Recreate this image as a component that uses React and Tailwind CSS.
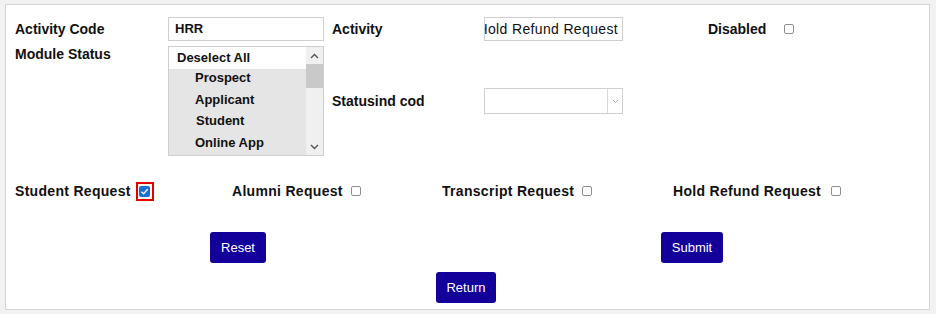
import React from "react";

const F = { fontFamily: '"Liberation Sans", Arial, sans-serif' };

function Box({ checked = false }) {
  if (checked) {
    return (
      <span className="inline-flex h-[19px] w-[18px] items-center justify-center border-2 border-[#e00000] bg-white">
        <span className="flex h-[11px] w-[11px] items-center justify-center rounded-[2px] bg-[#1a6fd8]">
          <svg width="9" height="9" viewBox="0 0 9 9">
            <path d="M1.5 4.8 L3.6 6.8 L7.6 2.2" fill="none" stroke="white" strokeWidth="1.4" />
          </svg>
        </span>
      </span>
    );
  }
  return <span className="inline-block h-[10px] w-[10px] rounded-[2px] border border-[#8f8f8f] bg-white" />;
}

function Btn({ children, w }) {
  return (
    <button
      className={`h-[31px] rounded-[3px] bg-[#13009b] text-[13px] font-normal text-white ${w}`}
      style={F}
    >
      {children}
    </button>
  );
}

export default function App() {
  return (
    <div className="h-[314px] w-[936px] bg-[#f2f2f2] pl-[5px] pt-[4px]" style={F}>
      <div className="h-[306px] w-[925px] border border-[#d5d5d5] bg-white text-[14px] font-bold text-[#111]">
        {/* Row 1 */}
        <div className="mt-[12px] flex h-[24px] items-center">
          <div className="w-[162px] pl-[9px]">Activity Code</div>
          <div className="flex h-[24px] w-[156px] items-center border border-[#cfcfcf] pl-[6px] text-[13px]">HRR</div>
          <div className="w-[160px] pl-[8px]">Activity</div>
          <div className="flex h-[24px] w-[139px] justify-end overflow-hidden border border-[#cfcfcf] pr-[4px] text-[14px] font-normal leading-[22px] whitespace-nowrap tracking-[0.35px]">
            <span>Hold Refund Request</span>
          </div>
          <div className="w-[85px]" />
          <div className="w-[76px]">Disabled</div>
          <Box />
        </div>
        {/* Row 2 */}
        <div className="mt-[5px] flex">
          <div className="w-[162px] pl-[9px] leading-[17px]">Module Status</div>
          <div className="flex h-[110px] w-[156px] border border-[#cfcfcf] text-[13px]">
            <div className="flex-1">
              <div className="h-[22px] bg-white pl-[8px] leading-[21px]">Deselect All</div>
              <div className="h-[86px] overflow-hidden bg-[#e5e5e5] pl-[26px]">
                <div className="mt-[-2px] leading-[21.5px]">Prospect</div>
                <div className="leading-[21.5px]">Applicant</div>
                <div className="pl-[1px] leading-[21.5px]">Student</div>
                <div className="leading-[21.5px]">Online App</div>
              </div>
            </div>
            <div className="flex w-[17px] flex-col bg-[#f0f0f0]">
              <div className="flex h-[17px] items-center justify-center">
                <svg width="9" height="6" viewBox="0 0 9 6"><path d="M1 5 L4.5 1.5 L8 5" fill="none" stroke="#555" strokeWidth="1.4" /></svg>
              </div>
              <div className="h-[24px] bg-[#c9c9c9]" />
              <div className="flex-1" />
              <div className="flex h-[17px] items-center justify-center">
                <svg width="9" height="6" viewBox="0 0 9 6"><path d="M1 1 L4.5 4.5 L8 1" fill="none" stroke="#555" strokeWidth="1.4" /></svg>
              </div>
            </div>
          </div>
          <div className="flex w-[160px] items-center pl-[8px]">Statusind cod</div>
          <div className="flex items-center">
            <div className="flex h-[26px] w-[139px] border border-[#cfcfcf]">
              <div className="flex-1" />
              <div className="flex w-[15px] items-center justify-center border-l border-[#d8d8d8]">
                <svg width="7" height="5" viewBox="0 0 7 5"><path d="M1 1 L3.5 3.5 L6 1" fill="none" stroke="#aaa" strokeWidth="1" /></svg>
              </div>
            </div>
          </div>
        </div>
        {/* Row 3 checkboxes */}
        <div className="mt-[25px] flex h-[20px] items-center tracking-[0.3px]">
          <div className="flex w-[226px] items-center pl-[9px]">
            <span className="mr-[5px]">Student Request</span>
            <Box checked />
          </div>
          <div className="flex w-[210px] items-center">
            <span className="mr-[8px]">Alumni Request</span>
            <Box />
          </div>
          <div className="flex w-[231px] items-center">
            <span className="mr-[8px]">Transcript Request</span>
            <Box />
          </div>
          <div className="flex items-center">
            <span className="mr-[10px]">Hold Refund Request</span>
            <Box />
          </div>
        </div>
        {/* Buttons */}
        <div className="mt-[31px] flex">
          <div className="w-[204px]" />
          <Btn w="w-[56px]">Reset</Btn>
          <div className="w-[395px]" />
          <Btn w="w-[62px]">Submit</Btn>
        </div>
        <div className="mt-[9px] flex pl-[430px]">
          <Btn w="w-[60px]">Return</Btn>
        </div>
      </div>
    </div>
  );
}
